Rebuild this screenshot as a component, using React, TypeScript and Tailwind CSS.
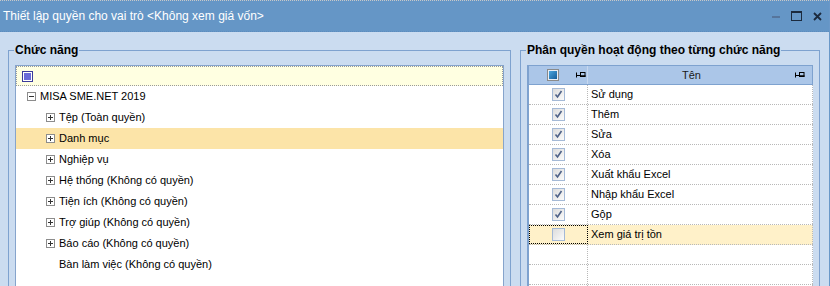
import type { ReactNode } from "react";

const font = "font-['Liberation_Sans',Arial,sans-serif]";

const treeItems: { label: string; level: number; box?: "plus" | "minus"; selected?: boolean }[] = [
  { label: "MISA SME.NET 2019", level: 0, box: "minus" },
  { label: "Tệp (Toàn quyền)", level: 1, box: "plus" },
  { label: "Danh mục", level: 1, box: "plus", selected: true },
  { label: "Nghiệp vụ", level: 1, box: "plus" },
  { label: "Hệ thống (Không có quyền)", level: 1, box: "plus" },
  { label: "Tiện ích (Không có quyền)", level: 1, box: "plus" },
  { label: "Trợ giúp (Không có quyền)", level: 1, box: "plus" },
  { label: "Báo cáo (Không có quyền)", level: 1, box: "plus" },
  { label: "Bàn làm việc (Không có quyền)", level: 1 },
];

const actions: { name: string; checked: boolean }[] = [
  { name: "Sử dụng", checked: true },
  { name: "Thêm", checked: true },
  { name: "Sửa", checked: true },
  { name: "Xóa", checked: true },
  { name: "Xuất khẩu Excel", checked: true },
  { name: "Nhập khẩu Excel", checked: true },
  { name: "Gộp", checked: true },
  { name: "Xem giá trị tồn", checked: false },
];

function ExpandBox({ kind }: { kind: "plus" | "minus" }) {
  return (
    <svg width="9" height="9" viewBox="0 0 9 9" className="shrink-0">
      <rect x="0.5" y="0.5" width="8" height="8" fill="#fff" stroke="#8c8c8c" />
      <line x1="2" y1="4.5" x2="7" y2="4.5" stroke="#333" />
      {kind === "plus" ? <line x1="4.5" y1="2" x2="4.5" y2="7" stroke="#333" /> : null}
    </svg>
  );
}

function Pin() {
  return (
    <svg width="10" height="8" viewBox="0 0 10 8" className="shrink-0">
      <line x1="0.5" y1="1.5" x2="0.5" y2="6.5" stroke="#000" />
      <line x1="0" y1="4.5" x2="4" y2="4.5" stroke="#000" />
      <rect x="4.5" y="1.5" width="4.5" height="4" fill="none" stroke="#000" />
      <line x1="4.5" y1="5" x2="9.5" y2="5" stroke="#000" strokeWidth="1.5" />
    </svg>
  );
}

function RowCheck({ checked }: { checked: boolean }) {
  return (
    <div className="flex h-[13px] w-[13px] items-center justify-center border border-[#a4b9d6] bg-gradient-to-br from-[#dcdcdc] to-[#fbfbfb]">
      {checked ? (
        <svg width="11" height="11" viewBox="0 0 11 11">
          <path d="M2.5 5.5 L4.5 8 L8.5 2" fill="none" stroke="#4f6288" strokeWidth="1.6" />
        </svg>
      ) : null}
    </div>
  );
}

function Group({ title, className, children }: { title: string; className: string; children: ReactNode }) {
  return (
    <fieldset className={`border border-[#7ea2cf] px-[6px] ${className}`}>
      <legend className="-ml-[1px] px-[1px] text-[12px] leading-[16px] font-bold text-black">{title}</legend>
      {children}
    </fieldset>
  );
}

export default function App() {
  return (
    <div className={`flex h-[286px] w-[830px] flex-col overflow-hidden border-r border-[#6a98c8] bg-[#cbdcf0] ${font}`}>
      <div className="flex h-[32px] shrink-0 items-center border-t border-dotted border-[#c8c8c8] border-b border-b-[#5d8cbd] bg-[#6596c6] pl-[3px] pr-[7px]">
        <span className="flex-1 text-[12px] text-white">Thiết lập quyền cho vai trò &lt;Không xem giá vốn&gt;</span>
        <div className="flex items-center gap-[11px]">
          <div className="mt-[2px] h-[2px] w-[8px] bg-[#56759c]" />
          <div className="h-[10px] w-[11px] border border-t-2 border-[#1b2a3e]" />
          <svg width="9" height="9" viewBox="0 0 9 9">
            <path d="M1 1 L8 8 M8 1 L1 8" stroke="#1b2a3e" strokeWidth="1.8" />
          </svg>
        </div>
      </div>

      <div className="flex gap-[9px] pt-[10px] pl-[8px]">
        <Group title="Chức năng" className="h-[270px] w-[503px]">
          <div className="mt-[7px] h-[230px] border border-[#86a4cc] bg-white text-[11px] text-black">
            <div className="flex h-[20px] items-center border border-dotted border-[#9a9a9a] bg-[#ffffe1] pl-[5px]">
              <div className="flex h-[11px] w-[11px] items-center justify-center border border-[#3c3c9a] bg-white">
                <div className="h-[7px] w-[7px] bg-[#6b6bd8]" />
              </div>
            </div>
            {treeItems.map((item) => (
              <div
                key={item.label}
                className={`flex h-[21px] items-center gap-[4px] ${item.level === 0 ? "pl-[11px]" : "pl-[30px]"} ${item.selected ? "bg-[#fce4a8]" : ""}`}
              >
                {item.box ? <ExpandBox kind={item.box} /> : <span className="w-[9px]" />}
                <span>{item.label}</span>
              </div>
            ))}
          </div>
        </Group>

        <Group title="Phân quyền hoạt động theo từng chức năng" className="h-[270px] w-[300px]">
          <div className="mt-[7px] h-[230px] border-l-2 border-[#7ea2cf] bg-white text-[11px] text-black">
            <div className="flex h-[20px] border-t border-r border-b border-[#7ea2cf] bg-[#abc6e8]">
              <div className="flex w-[59px] items-center border-r border-[#c6d7ee] pr-[1px]">
                <div className="flex flex-1 justify-center">
                  <div className="flex h-[12px] w-[12px] items-center justify-center border border-[#8a8a8a] bg-[#e8eef6]">
                    <div className="h-[8px] w-[8px] bg-gradient-to-br from-[#4aa6e0] to-[#155d99]" />
                  </div>
                </div>
                <Pin />
              </div>
              <div className="flex flex-1 items-center pr-[7px]">
                <span className="flex-1 text-center text-[#1a1a1a]">Tên</span>
                <Pin />
              </div>
            </div>
            {actions.map((a) => (
              <div
                key={a.name}
                className={`flex h-[20px] border-b border-dotted border-[#b8b8b8] ${a.checked ? "" : "bg-[#fff1c9]"}`}
              >
                <div
                  className={`flex w-[59px] items-center justify-center border-dotted ${a.checked ? "border-r border-[#b8b8b8]" : "border border-black bg-[#fff1c9]"}`}
                >
                  <RowCheck checked={a.checked} />
                </div>
                <div className="flex flex-1 items-center border-r border-dotted border-[#b8b8b8] pl-[3px]">{a.name}</div>
              </div>
            ))}
            {[0, 1, 2].map((i) => (
              <div key={i} className="flex h-[20px] border-b border-dotted border-[#b8b8b8]">
                <div className="w-[59px] border-r border-dotted border-[#b8b8b8]" />
                <div className="flex-1 border-r border-dotted border-[#b8b8b8]" />
              </div>
            ))}
          </div>
        </Group>
      </div>
    </div>
  );
}
